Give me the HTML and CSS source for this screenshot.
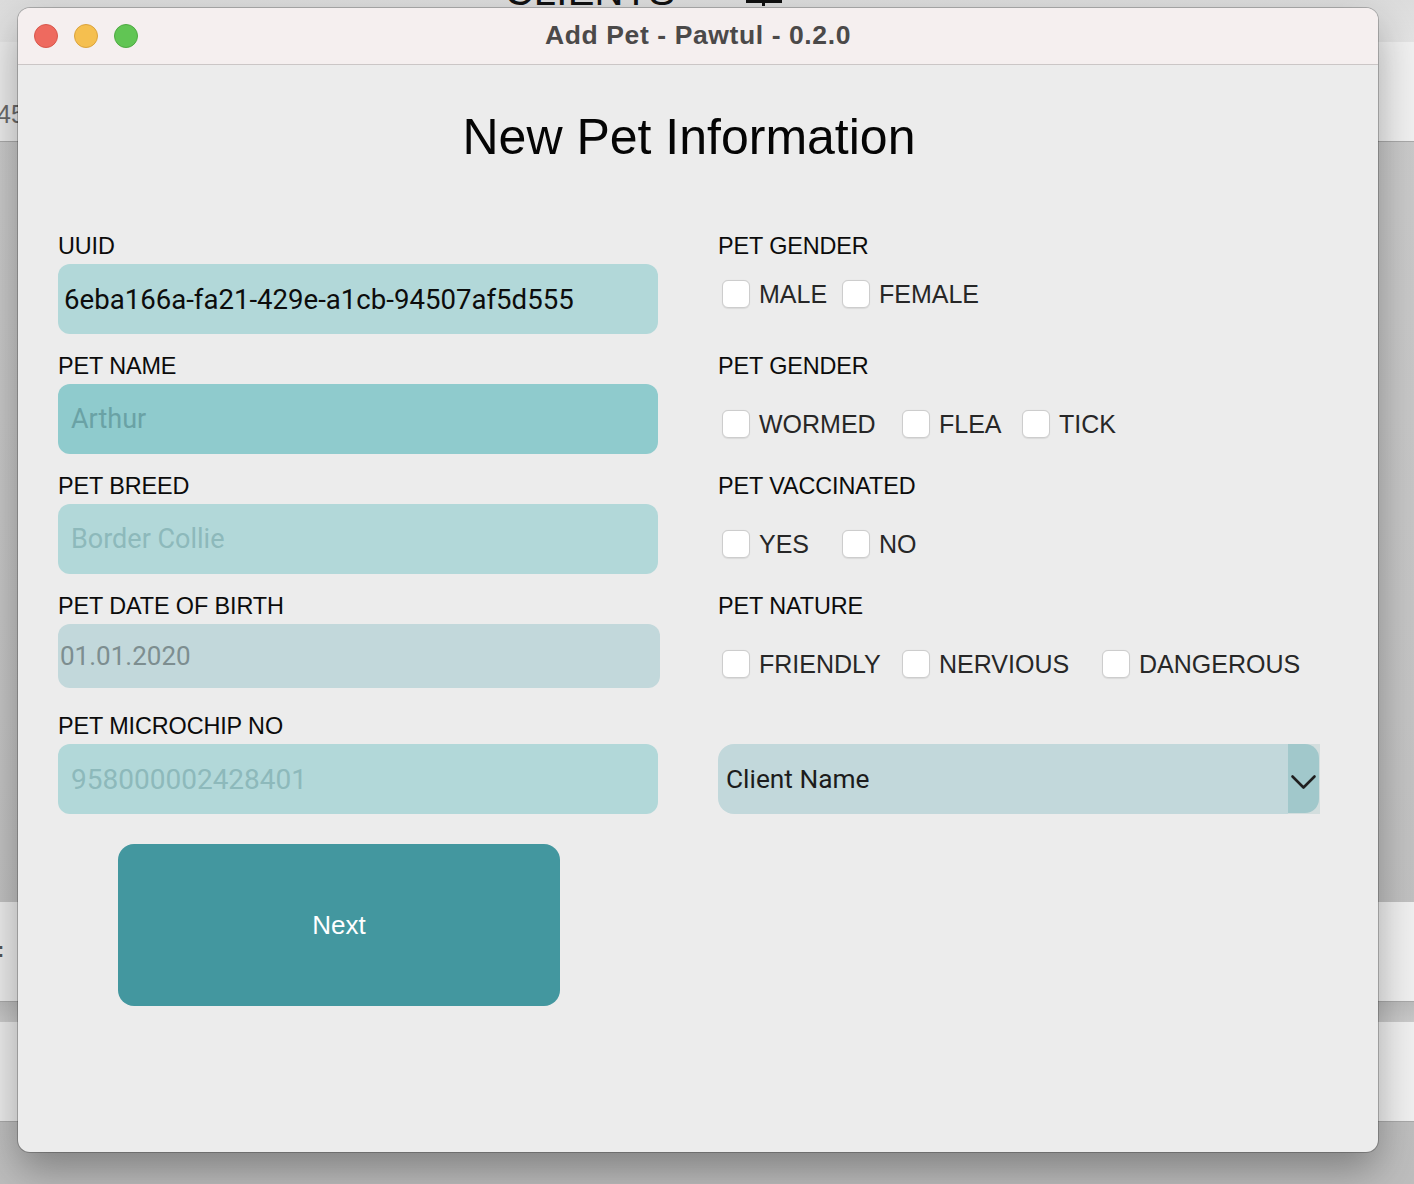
FILE: index.html
```html
<!DOCTYPE html>
<html lang="en">
<head>
<meta charset="utf-8">
<title>Add Pet - Pawtul - 0.2.0</title>
<link rel="stylesheet" href="styles.css">
</head>
<body>
<div class="desktop">
  <div class="bg-app">
    <header class="bg-header">
      <span class="bg-title">CLIENTS</span>
      <span class="bg-plus"></span>
    </header>
    <div class="bg-row"><span class="bg-num">45</span></div>
    <div class="bg-spacer"></div>
    <div class="bg-row"><span class="bg-colon">:</span></div>
    <div class="bg-gap"></div>
    <div class="bg-row"></div>
  </div>

  <div class="window">
    <div class="titlebar">
      <div class="lights">
        <span class="light red"></span>
        <span class="light yellow"></span>
        <span class="light green"></span>
      </div>
      <div class="title">Add Pet - Pawtul - 0.2.0</div>
      <div></div>
    </div>

    <main class="content">
      <h1 class="heading">New Pet Information</h1>
      <div class="form">
        <div class="col-left">
          <div class="field">
            <div class="label">UUID</div>
            <div class="input input-value">6eba166a-fa21-429e-a1cb-94507af5d555</div>
          </div>
          <div class="field">
            <div class="label">PET NAME</div>
            <div class="input input-focus"><span class="ph ph-dark">Arthur</span></div>
          </div>
          <div class="field">
            <div class="label">PET BREED</div>
            <div class="input"><span class="ph">Border Collie</span></div>
          </div>
          <div class="field">
            <div class="label">PET DATE OF BIRTH</div>
            <div class="input input-date"><span class="ph ph-gray">01.01.2020</span></div>
          </div>
          <div class="field">
            <div class="label">PET MICROCHIP NO</div>
            <div class="input"><span class="ph ph-num">958000002428401</span></div>
          </div>
          <button class="next" type="button">Next</button>
        </div>

        <div class="col-right">
          <div class="group group-first">
            <div class="label">PET GENDER</div>
            <div class="checks">
              <label class="check w120"><span class="box"></span>MALE</label>
              <label class="check"><span class="box"></span>FEMALE</label>
            </div>
          </div>
          <div class="group">
            <div class="label">PET GENDER</div>
            <div class="checks">
              <label class="check w180"><span class="box"></span>WORMED</label>
              <label class="check w120"><span class="box"></span>FLEA</label>
              <label class="check"><span class="box"></span>TICK</label>
            </div>
          </div>
          <div class="group">
            <div class="label">PET VACCINATED</div>
            <div class="checks">
              <label class="check w120"><span class="box"></span>YES</label>
              <label class="check"><span class="box"></span>NO</label>
            </div>
          </div>
          <div class="group group-last">
            <div class="label">PET NATURE</div>
            <div class="checks">
              <label class="check w180"><span class="box"></span>FRIENDLY</label>
              <label class="check w200"><span class="box"></span>NERVIOUS</label>
              <label class="check"><span class="box"></span>DANGEROUS</label>
            </div>
          </div>
          <div class="select">
            <div class="select-text">Client Name</div>
            <div class="select-btn">
              <div class="select-btn-inner">
                <svg width="30" height="70" viewBox="0 0 30 70" aria-hidden="true">
                  <path d="M4.5 32.5 L15.5 43.5 L26.5 32.5" fill="none" stroke="#1f1f1f" stroke-width="2.6" stroke-linecap="round" stroke-linejoin="round"/>
                </svg>
              </div>
            </div>
          </div>
        </div>
      </div>
    </main>
  </div>
</div>
</body>
</html>
```

FILE: styles.css
```css
* { box-sizing: border-box; }

html, body {
  margin: 0;
  padding: 0;
}

body {
  width: 1414px;
  height: 1184px;
  overflow: hidden;
  font-family: "Liberation Sans", Arial, sans-serif;
  background: #c6c6c6;
}

.desktop {
  position: relative;
  width: 1414px;
  height: 1184px;
  background: linear-gradient(180deg, #cbcbcb 0%, #c4c4c4 60%, #bdbdbd 100%);
}

/* ---------- background application (behind the window) ---------- */
.bg-app {
  display: flex;
  flex-direction: column;
  width: 100%;
}

.bg-header {
  height: 42px;
  background: linear-gradient(180deg, #dcdcdc, #e3e3e3);
  display: flex;
  justify-content: center;
  align-items: flex-start;
  gap: 70px;
  overflow: hidden;
  padding-right: 128px;
}

.bg-title {
  font-size: 40px;
  line-height: 40px;
  margin-top: -29px;
  color: #111;
  letter-spacing: 0.3px;
}

.bg-plus {
  position: relative;
  width: 36px;
  height: 10px;
  margin-top: -4px;
}
.bg-plus::before {
  content: "";
  position: absolute;
  left: 0;
  top: 4px;
  width: 36px;
  height: 3px;
  background: #111;
}
.bg-plus::after {
  content: "";
  position: absolute;
  left: 16px;
  top: 0;
  width: 3px;
  height: 10px;
  background: #111;
}

.bg-row {
  height: 100px;
  background: linear-gradient(90deg, #ebebeb, #f0f0f0);
  border-bottom: 1px solid #a9a9a9;
  display: flex;
  align-items: flex-end;
  overflow: hidden;
}

.bg-num {
  margin-left: -3px;
  margin-bottom: 12px;
  font-size: 25px;
  color: #6a6a6a;
}

.bg-colon {
  margin-left: -3px;
  margin-bottom: 38px;
  font-size: 22px;
  font-weight: bold;
  color: #555;
}

.bg-spacer {
  height: 760px;
}

.bg-gap {
  height: 20px;
  background: linear-gradient(180deg, #bcbcbc, #cacaca);
}

/* ---------- window ---------- */
.window {
  position: absolute;
  left: 18px;
  top: 8px;
  width: 1360px;
  height: 1144px;
  border-radius: 12px;
  background: #ececec;
  overflow: hidden;
  box-shadow: 0 0 0 1px rgba(0, 0, 0, 0.22), 0 18px 40px rgba(0, 0, 0, 0.32);
  display: flex;
  flex-direction: column;
}

.titlebar {
  height: 57px;
  flex: 0 0 57px;
  background: #f5efef;
  border-bottom: 1px solid #cbc6c6;
  display: grid;
  grid-template-columns: 1fr auto 1fr;
  align-items: center;
}

.lights {
  display: flex;
  gap: 16px;
  padding-left: 16px;
}

.light {
  width: 24px;
  height: 24px;
  border-radius: 50%;
}
.light.red { background: #ee6a5f; border: 1px solid #d8574c; }
.light.yellow { background: #f5bf4f; border: 1px solid #dba33c; }
.light.green { background: #61c554; border: 1px solid #4eaa42; }

.title {
  font-weight: bold;
  font-size: 26.5px;
  letter-spacing: 0.6px;
  color: #4b4949;
  line-height: 30px;
  padding-bottom: 3px;
}

.content {
  flex: 1;
  padding: 42px 58px 0 40px;
}

.heading {
  margin: 0;
  font-family: "Liberation Sans", Arial, sans-serif;
  font-weight: normal;
  font-size: 50px;
  line-height: 60px;
  text-align: center;
  color: #050505;
}

.form {
  margin-top: 66px;
  display: grid;
  grid-template-columns: 600px 602px;
  column-gap: 60px;
  align-items: start;
}

.label {
  font-size: 23.4px;
  line-height: 26px;
  height: 26px;
  color: #0b0b0b;
  white-space: nowrap;
  letter-spacing: -0.1px;
}

/* ---------- left column ---------- */
.field .label {
  margin-bottom: 5px;
}

.input {
  height: 70px;
  width: 600px;
  border-radius: 12px;
  background: #b2d8d9;
  margin-bottom: 19px;
  display: flex;
  align-items: center;
  padding-left: 13px;
  font-family: Roboto, "Liberation Sans", sans-serif;
  font-size: 27px;
  white-space: nowrap;
}

.input-value {
  padding-left: 6px;
  color: #0c0c0c;
  font-size: 27.6px;
}

.input-focus {
  background: #8fcbcd;
}

.input-date {
  width: 602px;
  height: 64px;
  margin-bottom: 25px;
  background: #c2d8db;
  padding-left: 2px;
  font-size: 26px;
}

.ph { color: #8db9bb; }
.ph-dark { color: #6aa2a5; }
.ph-gray { color: #7d8e90; }
.ph-num { font-size: 28px; }

.next {
  display: flex;
  align-items: center;
  justify-content: center;
  margin: 30px 0 0 60px;
  width: 442px;
  height: 162px;
  border: none;
  border-radius: 16px;
  background: #43979f;
  color: #ffffff;
  font-family: "Liberation Sans", Arial, sans-serif;
  font-size: 26px;
  padding: 0;
  cursor: pointer;
}

/* ---------- right column ---------- */
.group .label {
  margin-bottom: 25px;
}
.group {
  margin-bottom: 29px;
}
.group-first .label {
  margin-bottom: 15px;
}
.group-first {
  margin-bottom: 39px;
}
.group-last {
  margin-bottom: 60px;
}

.checks {
  height: 40px;
  display: flex;
  align-items: center;
  padding-left: 4px;
}

.check {
  display: flex;
  align-items: center;
  gap: 9px;
  font-size: 25px;
  color: #272727;
  white-space: nowrap;
}
.w120 { width: 120px; }
.w180 { width: 180px; }
.w200 { width: 200px; }

.box {
  width: 28px;
  height: 28px;
  border-radius: 6px;
  background: #ffffff;
  border: 1px solid #cdcdcd;
  box-shadow: 0 0.5px 1px rgba(0, 0, 0, 0.08);
  flex: 0 0 28px;
}

.select {
  height: 70px;
  width: 602px;
  display: flex;
  background: #c2d8db;
  border-radius: 16px 0 0 16px;
}

.select-text {
  flex: 1;
  display: flex;
  align-items: center;
  padding-left: 8px;
  font-family: Roboto, "Liberation Sans", sans-serif;
  font-size: 26.3px;
  color: #1c1c1c;
}

.select-btn {
  width: 32px;
  height: 70px;
  background: #d3dede;
  padding: 0 1px 1px 0;
}

.select-btn-inner {
  width: 31px;
  height: 69px;
  background: #a1c8cb;
  border-radius: 0 14px 14px 0;
}

.select-btn-inner svg {
  display: block;
}
```
